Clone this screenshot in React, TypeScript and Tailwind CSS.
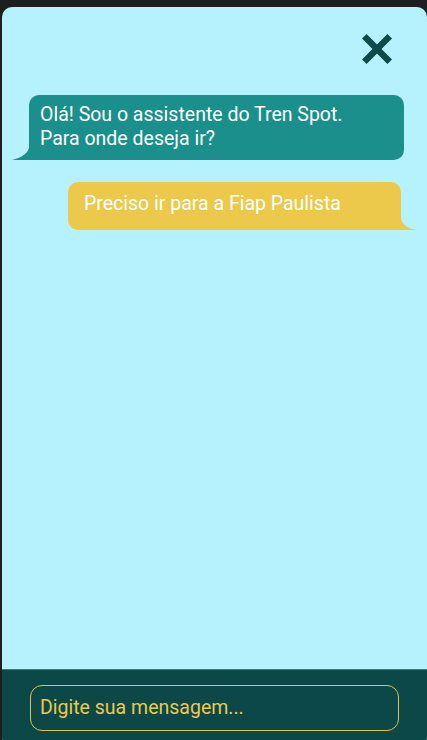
import React from "react";

type Msg = { from: "bot" | "user"; text: string[] };

const messages: Msg[] = [
    { from: "bot", text: ["Olá! Sou o assistente do Tren Spot.", "Para onde deseja ir?"] },
    { from: "user", text: ["Preciso ir para a Fiap Paulista"] },
];

function CloseIcon() {
    return (
        <svg width="30" height="30" viewBox="0 0 30 30" fill="none">
            <line x1="2.3" y1="2.3" x2="27.7" y2="27.7" stroke="#0d4a49" strokeWidth="6.5" />
            <line x1="27.7" y1="2.3" x2="2.3" y2="27.7" stroke="#0d4a49" strokeWidth="6.5" />
        </svg>
    );
}

function Bubble({ msg }: { msg: Msg }) {
    if (msg.from === "bot") {
        return (
            <div className="relative ml-[27px] mr-[23px] rounded-[10px] rounded-bl-none bg-[#1b8f8b] pb-[9px] pl-[11px] pr-[11px] pt-[8px] text-[19.5px] leading-[24px] text-white">
                {msg.text.map((t) => (
                    <p key={t}>{t}</p>
                ))}
                <svg className="absolute bottom-0 left-[-17px]" width="18" height="15" viewBox="0 0 18 15">
                    <path d="M17.5 0 C17.5 8 9 13 0 15 L18 15 Z" fill="#1b8f8b" />
                </svg>
            </div>
        );
    }
    return (
        <div className="relative mr-[26px] w-[333px] self-end rounded-[10px] rounded-br-none bg-[#ecc94b] pb-[14px] pl-[16px] pr-[15px] pt-[10px] text-[19.5px] leading-[24px] text-white">
            {msg.text.map((t) => (
                <p key={t}>{t}</p>
            ))}
            <svg className="absolute bottom-0 right-[-15px]" width="16" height="15" viewBox="0 0 16 15">
                <path d="M0.5 0 C0.5 8 6 13 16 15 L0 15 Z" fill="#ecc94b" />
            </svg>
        </div>
    );
}

export default function App() {
    return (
        <div className="h-[740px] w-[427px] overflow-hidden bg-[#1e1e1e] pl-[2px] pt-[7px]" style={{ fontFamily: "Roboto, 'Noto Sans', sans-serif" }}>
            <div className="flex h-[740px] flex-col overflow-hidden rounded-[10px] bg-[#b6f2fd]">
                <div className="flex h-[88px] justify-end pr-[35px] pt-[27px]">
                    <CloseIcon />
                </div>
                <div className="flex flex-1 flex-col gap-[22px]">
                    {messages.map((m, i) => (
                        <Bubble key={i} msg={m} />
                    ))}
                </div>
                <div className="mb-[7px] h-[71px] shrink-0 border-t border-[#3a7b7b] bg-[#0d4848] pl-[28px] pt-[15px]">
                    <div className="flex h-[46px] w-[369px] items-center rounded-[12px] border-[1.5px] border-[#e2c24a] px-[9px] text-[19.5px] text-[#ecc94b]">
                        Digite sua mensagem...
                    </div>
                </div>
            </div>
        </div>
    );
}
